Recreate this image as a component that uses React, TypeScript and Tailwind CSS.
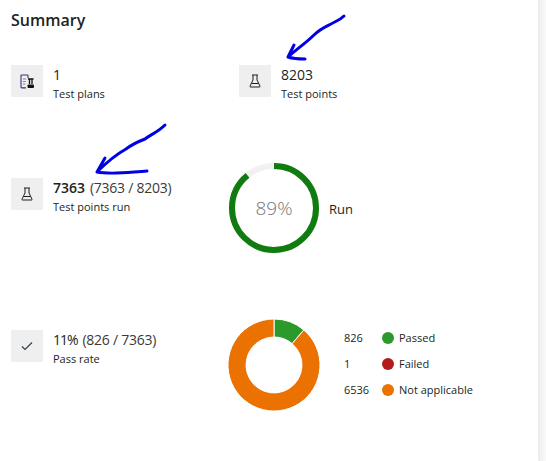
const font = { fontFamily: '"Open Sans", "Noto Sans", sans-serif' };

function TileIcon({ children }: { children: React.ReactNode }) {
  return (
    <div className="flex h-8 w-8 shrink-0 items-center justify-center bg-[#efefef]">
      {children}
    </div>
  );
}

function Flask() {
  return (
    <svg width="12" height="14" viewBox="0 0 12 14" fill="none" stroke="#201f1e" strokeWidth="1">
      <path d="M3 1h6M4 1v5L1 12.2c-.2.5 0 .8.5.8h9c.5 0 .7-.3.5-.8L8 6V1M2.6 9.5h6.8" />
    </svg>
  );
}

function PlanIcon() {
  return (
    <svg width="14" height="15" viewBox="0 0 14 15" fill="none">
      <path d="M1 1.5c0-.3.2-.5.5-.5h6c.3 0 .5.2.5.5V4M1 1.5v11.5c0 .5.3.9.8.9H6" stroke="#4b2a7c" strokeWidth="1.1" />
      <path d="M2.8 5h3.5M2.8 7.5h3M2.8 10h2.5" stroke="#8a8886" strokeWidth="1" />
      <path d="M8 5h5.5M9.5 5v5M12 5v5" stroke="#111" strokeWidth="1.3" />
      <rect x="7.5" y="10.5" width="6.5" height="3.5" rx="1" fill="#111" />
    </svg>
  );
}

function Stat({ icon, value, extra, label, weight }: { icon: React.ReactNode; value: string; extra?: string; label: string; weight: string }) {
  return (
    <div className="flex gap-[10px]">
      <TileIcon>{icon}</TileIcon>
      <div>
        <div className="text-[14px] leading-[20px] text-[#201f1e]">
          <span className={weight}>{value}</span>
          {extra && <span className="ml-[1.5px] tracking-[-0.25px] text-[#3b3a39]"> {extra}</span>}
        </div>
        <div className="mt-px text-[11px] leading-[15px] text-[#201f1e]">{label}</div>
      </div>
    </div>
  );
}

function Ring() {
  const r = 42;
  const c = 2 * Math.PI * r;
  return (
    <div className="relative h-[90px] w-[90px]">
      <svg width="90" height="90" viewBox="0 0 90 90">
        <circle cx="45" cy="45" r={r} fill="none" stroke="#f1f1f1" strokeWidth="6" />
        <circle
          cx="45"
          cy="45"
          r={r}
          fill="none"
          stroke="#107c10"
          strokeWidth="6"
          strokeDasharray={`${c * 0.89} ${c}`}
          transform="rotate(-90 45 45)"
        />
      </svg>
      <div className="absolute inset-0 flex items-center justify-center text-[19px] font-light text-[#767676]">89%</div>
    </div>
  );
}

function pt(deg: number, r: number) {
  const a = ((deg - 90) * Math.PI) / 180;
  return `${46 + r * Math.cos(a)} ${46 + r * Math.sin(a)}`;
}

function arc(a: number, b: number, fill: string) {
  const large = b - a > 180 ? 1 : 0;
  return (
    <path
      d={`M${pt(a, 46)}A46 46 0 ${large} 1 ${pt(b, 46)}L${pt(b, 28)}A28 28 0 ${large} 0 ${pt(a, 28)}Z`}
      fill={fill}
      stroke="#fff"
      strokeWidth="1"
    />
  );
}

function Donut() {
  return (
    <svg width="92" height="92" viewBox="0 0 92 92">
      {arc(0, 40.4, "#2b9a2b")}
      {arc(40.4, 360, "#eb7100")}
    </svg>
  );
}

function Legend({ n, color, label }: { n: string; color: string; label: string }) {
  return (
    <div className="flex h-[26px] items-center text-[11px] text-[#201f1e]">
      <span className="w-[38px]">{n}</span>
      <span className="h-3 w-3 rounded-full" style={{ backgroundColor: color }} />
      <span className="ml-[5px]">{label}</span>
    </div>
  );
}

export default function App() {
  return (
    <div style={font} className="relative flex h-[461px] w-[546px] overflow-hidden bg-white">
      <main className="w-[538px] pl-[11px]">
        <h1 className="pt-[9px] text-[16px] font-semibold leading-[22px] text-[#201f1e]">Summary</h1>
        <div className="mt-[34px] grid grid-cols-[228px_1fr]">
          <Stat weight="font-medium" icon={<PlanIcon />} value="1" label="Test plans" />
          <Stat weight="font-medium" icon={<Flask />} value="8203" label="Test points" />
        </div>
        <div className="mt-[62px] grid grid-cols-[218px_1fr]">
          <div className="pt-[15px]">
            <Stat weight="font-semibold" icon={<Flask />} value="7363" extra="(7363 / 8203)" label="Test points run" />
          </div>
          <div className="flex items-center gap-[10px]">
            <Ring />
            <span className="pt-[3px] text-[13px] text-[#201f1e]">Run</span>
          </div>
        </div>
        <div className="mt-[66px] grid grid-cols-[217px_1fr]">
          <div className="pt-[11px]">
            <Stat
              weight="tracking-[-1px]"
              icon={
                <svg width="12" height="10" viewBox="0 0 12 10" fill="none" stroke="#2f4050" strokeWidth="1.2">
                  <path d="M1 5.5L4 8.5L11 1.5" />
                </svg>
              }
              value="11%"
              extra="(826 / 7363)"
              label="Pass rate"
            />
          </div>
          <div className="flex items-center">
            <Donut />
            <div className="ml-[24px] -mt-[2px]">
              <Legend n="826" color="#2b9a2b" label="Passed" />
              <Legend n="1" color="#b31b1b" label="Failed" />
              <Legend n="6536" color="#eb7100" label="Not applicable" />
            </div>
          </div>
        </div>
      </main>
      <div className="w-2 bg-gradient-to-r from-[#ececec] to-[#fafafa]" />
      <svg className="pointer-events-none absolute left-0 top-0" width="546" height="461" fill="none" stroke="#0000e6" strokeWidth="3" strokeLinecap="round" strokeLinejoin="round">
        <path d="M344 16C340 20 336 21 331 24C325 27 320 29 314 35C307 42 297 49 288 57M294 45L288 57C294 59 299 59 305 59" />
        <path d="M165 125C158 132 150 135 145 139C137 142 130 146 126 149C117 154 106 163 97 172M105 158L97 172C112 175 130 172 147 171" />
      </svg>
    </div>
  );
}
